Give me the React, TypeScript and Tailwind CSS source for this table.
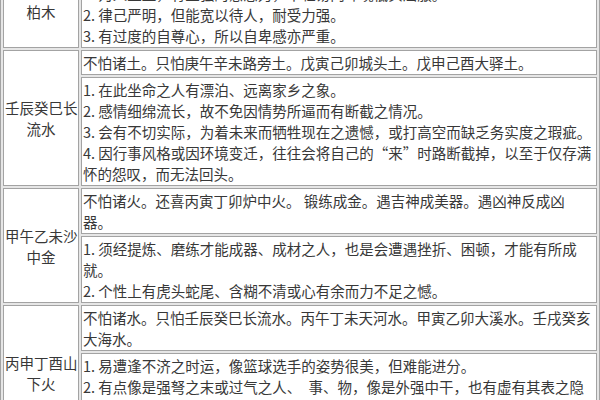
import React from "react";

type Row = {
  name: string[];
  lead: string[];
  items: string[][];
};

const rows: Row[] = [
  {
    name: ["庚寅辛卯松", "柏木"],
    lead: ["不怕诸金。只怕庚申辛酉石榴木。"],
    items: [
      ["1. 为人正直，有坚强的意志力，不轻易向环境低头屈服。"],
      ["2. 律己严明，但能宽以待人，耐受力强。"],
      ["3. 有过度的自尊心，所以自卑感亦严重。"],
    ],
  },
  {
    name: ["壬辰癸巳长", "流水"],
    lead: ["不怕诸土。只怕庚午辛未路旁土。戊寅己卯城头土。戊申己酉大驿土。"],
    items: [
      ["1. 在此坐命之人有漂泊、远离家乡之象。"],
      ["2. 感情细绵流长，故不免因情势所逼而有断截之情况。"],
      ["3. 会有不切实际，为着未来而牺牲现在之遗憾，或打高空而缺乏务实度之瑕疵。"],
      [
        "4. 因行事风格或因环境变迁，往往会将自己的“来”时路断截掉，以至于仅存满",
        "怀的怨叹，而无法回头。",
      ],
    ],
  },
  {
    name: ["甲午乙未沙", "中金"],
    lead: ["不怕诸火。还喜丙寅丁卯炉中火。 锻练成金。遇吉神成美器。遇凶神反成凶", "器。"],
    items: [
      ["1. 须经提炼、磨练才能成器、成材之人，也是会遭遇挫折、困顿，才能有所成", "就。"],
      ["2. 个性上有虎头蛇尾、含糊不清或心有余而力不足之憾。"],
    ],
  },
  {
    name: ["丙申丁酉山", "下火"],
    lead: ["不怕诸水。只怕壬辰癸巳长流水。丙午丁未天河水。甲寅乙卯大溪水。壬戌癸亥", "大海水。"],
    items: [
      ["1. 易遭逢不济之时运，像篮球选手的姿势很美，但难能进分。"],
      ["2. 有点像是强弩之末或过气之人、　事、物，像是外强中干，也有虚有其表之隐", "忧。"],
      ["3. 一生劳碌奔波，宜守成而不宜冒进。"],
    ],
  },
];

function Lines({ lines }: { lines: string[] }) {
  return (
    <>
      {lines.map((line, i) => (
        <div key={i} className="whitespace-pre">
          {line}
        </div>
      ))}
    </>
  );
}

export default function App() {
  return (
    <div className="h-[400px] w-[600px] overflow-hidden bg-white">
      <table className="mt-[-49px] w-[600px] table-fixed border-separate border-spacing-[2px] border border-[#a3a3a3] bg-[#e6e6e6] text-[14.5px] leading-[21px] text-[#383838] [font-family:'Noto_Sans_CJK_SC','Noto_Sans',sans-serif]">
        <tbody>
          {rows.map((row) => (
            <React.Fragment key={row.name.join("")}>
              <tr>
                <td
                  rowSpan={2}
                  className="w-[76px] border border-[#a3a3a3] bg-white p-[1px] text-center align-middle"
                >
                  <Lines lines={row.name} />
                </td>
                <td className="border border-[#a3a3a3] bg-white px-[1px] py-[1px] align-top">
                  <Lines lines={row.lead} />
                </td>
              </tr>
              <tr>
                <td className="border border-[#a3a3a3] bg-white px-[1px] py-[1px] align-top">
                  {row.items.map((item, i) => (
                    <Lines key={i} lines={item} />
                  ))}
                </td>
              </tr>
            </React.Fragment>
          ))}
        </tbody>
      </table>
    </div>
  );
}
